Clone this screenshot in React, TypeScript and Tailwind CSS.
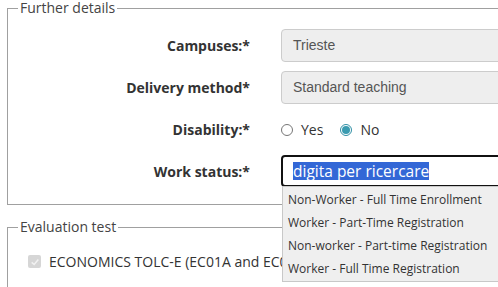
import React from 'react'

const options = [
  'Non-Worker - Full Time Enrollment',
  'Worker - Part-Time Registration',
  'Non-worker - Part-time Registration',
  'Worker - Full Time Registration',
]

const openSans = "font-['Open_Sans',sans-serif]"

function Label({ children }: { children: React.ReactNode }) {
  return (
    <div className={`${openSans} flex items-center justify-end text-[14px] font-bold text-[#333]`}>{children}</div>
  )
}

function ReadOnlyInput({ value }: { value: string }) {
  return (
    <div className="flex h-[33px] items-center rounded-[4px] border border-[#ccc] bg-[#eee] pl-[11px] font-['Liberation_Sans',Arial,sans-serif] text-[14px] text-[#555]">
      {value}
    </div>
  )
}

function Radio({ checked, label }: { checked?: boolean; label: string }) {
  return (
    <label className="flex items-center gap-[8px]">
      <span
        className={`flex h-[12px] w-[12px] items-center justify-center rounded-full border ${
          checked ? 'border-[#2f8fa5]' : 'border-[#767676]'
        } bg-white`}
      >
        {checked && <span className="h-[8px] w-[8px] rounded-full bg-[#3a9bb0]" />}
      </span>
      <span className="text-[14px] text-[#333]">{label}</span>
    </label>
  )
}

export default function App() {
  return (
    <div className={`${openSans} h-[287px] w-[498px] overflow-hidden bg-white pl-[7px]`}>
      {/* Further details */}
      <fieldset className="w-[560px] border border-[#a0a0a0] pb-[17px]">
        <legend className="ml-[10px] px-[2px] text-[14px] leading-[16px] text-[#444]">Further details</legend>
        <div className="mt-[13px] grid grid-cols-[242px_1fr] gap-x-[31px] gap-y-[9px]">
          <Label>Campuses:*</Label>
          <ReadOnlyInput value="Trieste" />

          <Label>Delivery method*</Label>
          <ReadOnlyInput value="Standard teaching" />

          <Label>Disability:*</Label>
          <div className={`${openSans} flex h-[33px] items-center gap-[17px]`}>
            <Radio label="Yes" />
            <Radio label="No" checked />
          </div>

          <Label>Work status:*</Label>
          <div className="relative">
            <div className="flex h-[32px] items-center rounded-[4px] border-2 border-[#111] pl-[10px]">
              <span className="bg-[#3367d6] text-[15.5px] leading-[18px] text-white">digita per ricercare</span>
            </div>
            <ul className="absolute top-[31px] left-[1px] z-10 w-[260px] border border-[#c8c8c8] bg-[#efefef] py-[1px]">
              {options.map((o) => (
                <li key={o} className="flex h-[23px] items-center pl-[5px] text-[12px] text-[#333]">
                  {o}
                </li>
              ))}
            </ul>
          </div>
        </div>
      </fieldset>

      {/* Evaluation test */}
      <fieldset className="mt-[14px] h-[100px] w-[560px] border border-[#a0a0a0]">
        <legend className="ml-[10px] px-[2px] text-[14px] leading-[16px] text-[#444]">Evaluation test</legend>
        <div className="mt-[16px] flex items-center gap-[8px] pl-[20px]">
          <span className="flex h-[13px] w-[13px] items-center justify-center rounded-[2px] bg-[#d6d6d6]">
            <svg viewBox="0 0 12 12" className="h-[10px] w-[10px]">
              <path d="M2 6.5 L5 9 L10 3" fill="none" stroke="#f2f2f2" strokeWidth="1.8" />
            </svg>
          </span>
          <span className="text-[14px] text-[#333]">ECONOMICS TOLC-E (EC01A and EC01B)</span>
        </div>
      </fieldset>
    </div>
  )
}
